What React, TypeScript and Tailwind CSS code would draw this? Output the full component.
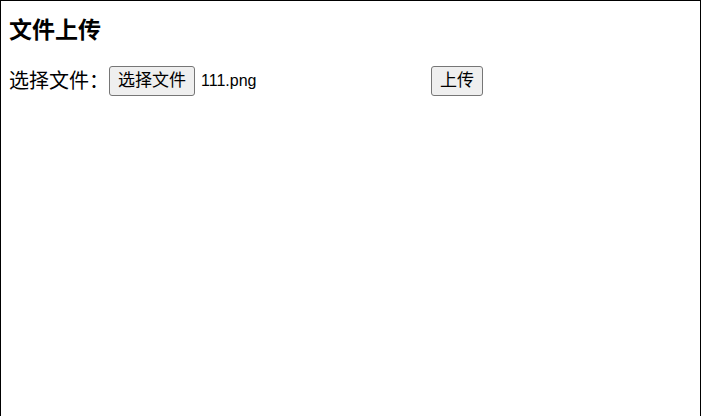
import React from 'react';

const App: React.FC = () => {
  return (
    <div
      className="h-[416px] w-[701px] border-l border-r border-t border-black bg-white pl-[8px] pt-[14px] text-black"
      style={{ fontFamily: '"Liberation Sans", "Noto Sans CJK SC", sans-serif' }}
    >
      <h3 className="text-[23px] font-bold leading-[30px]">文件上传</h3>

      <form className="mt-[21px] flex items-center" onSubmit={(e) => e.preventDefault()}>
        <label className="w-[100px] shrink-0 text-[20px] leading-[30px]">选择文件：</label>

        {/* file input */}
        <div className="flex w-[318px] shrink-0 items-center text-base">
          <button
            type="button"
            className="h-[30px] w-[86px] rounded-[3px] border border-[#767676] bg-[#efefef] text-[17px]"
          >
            选择文件
          </button>
          <span className="ml-[6px]">111.png</span>
        </div>

        <button
          type="submit"
          className="ml-[4px] h-[30px] w-[52px] rounded-[3px] border border-[#767676] bg-[#efefef] text-[17px]"
        >
          上传
        </button>
      </form>
    </div>
  );
};

export default App;
